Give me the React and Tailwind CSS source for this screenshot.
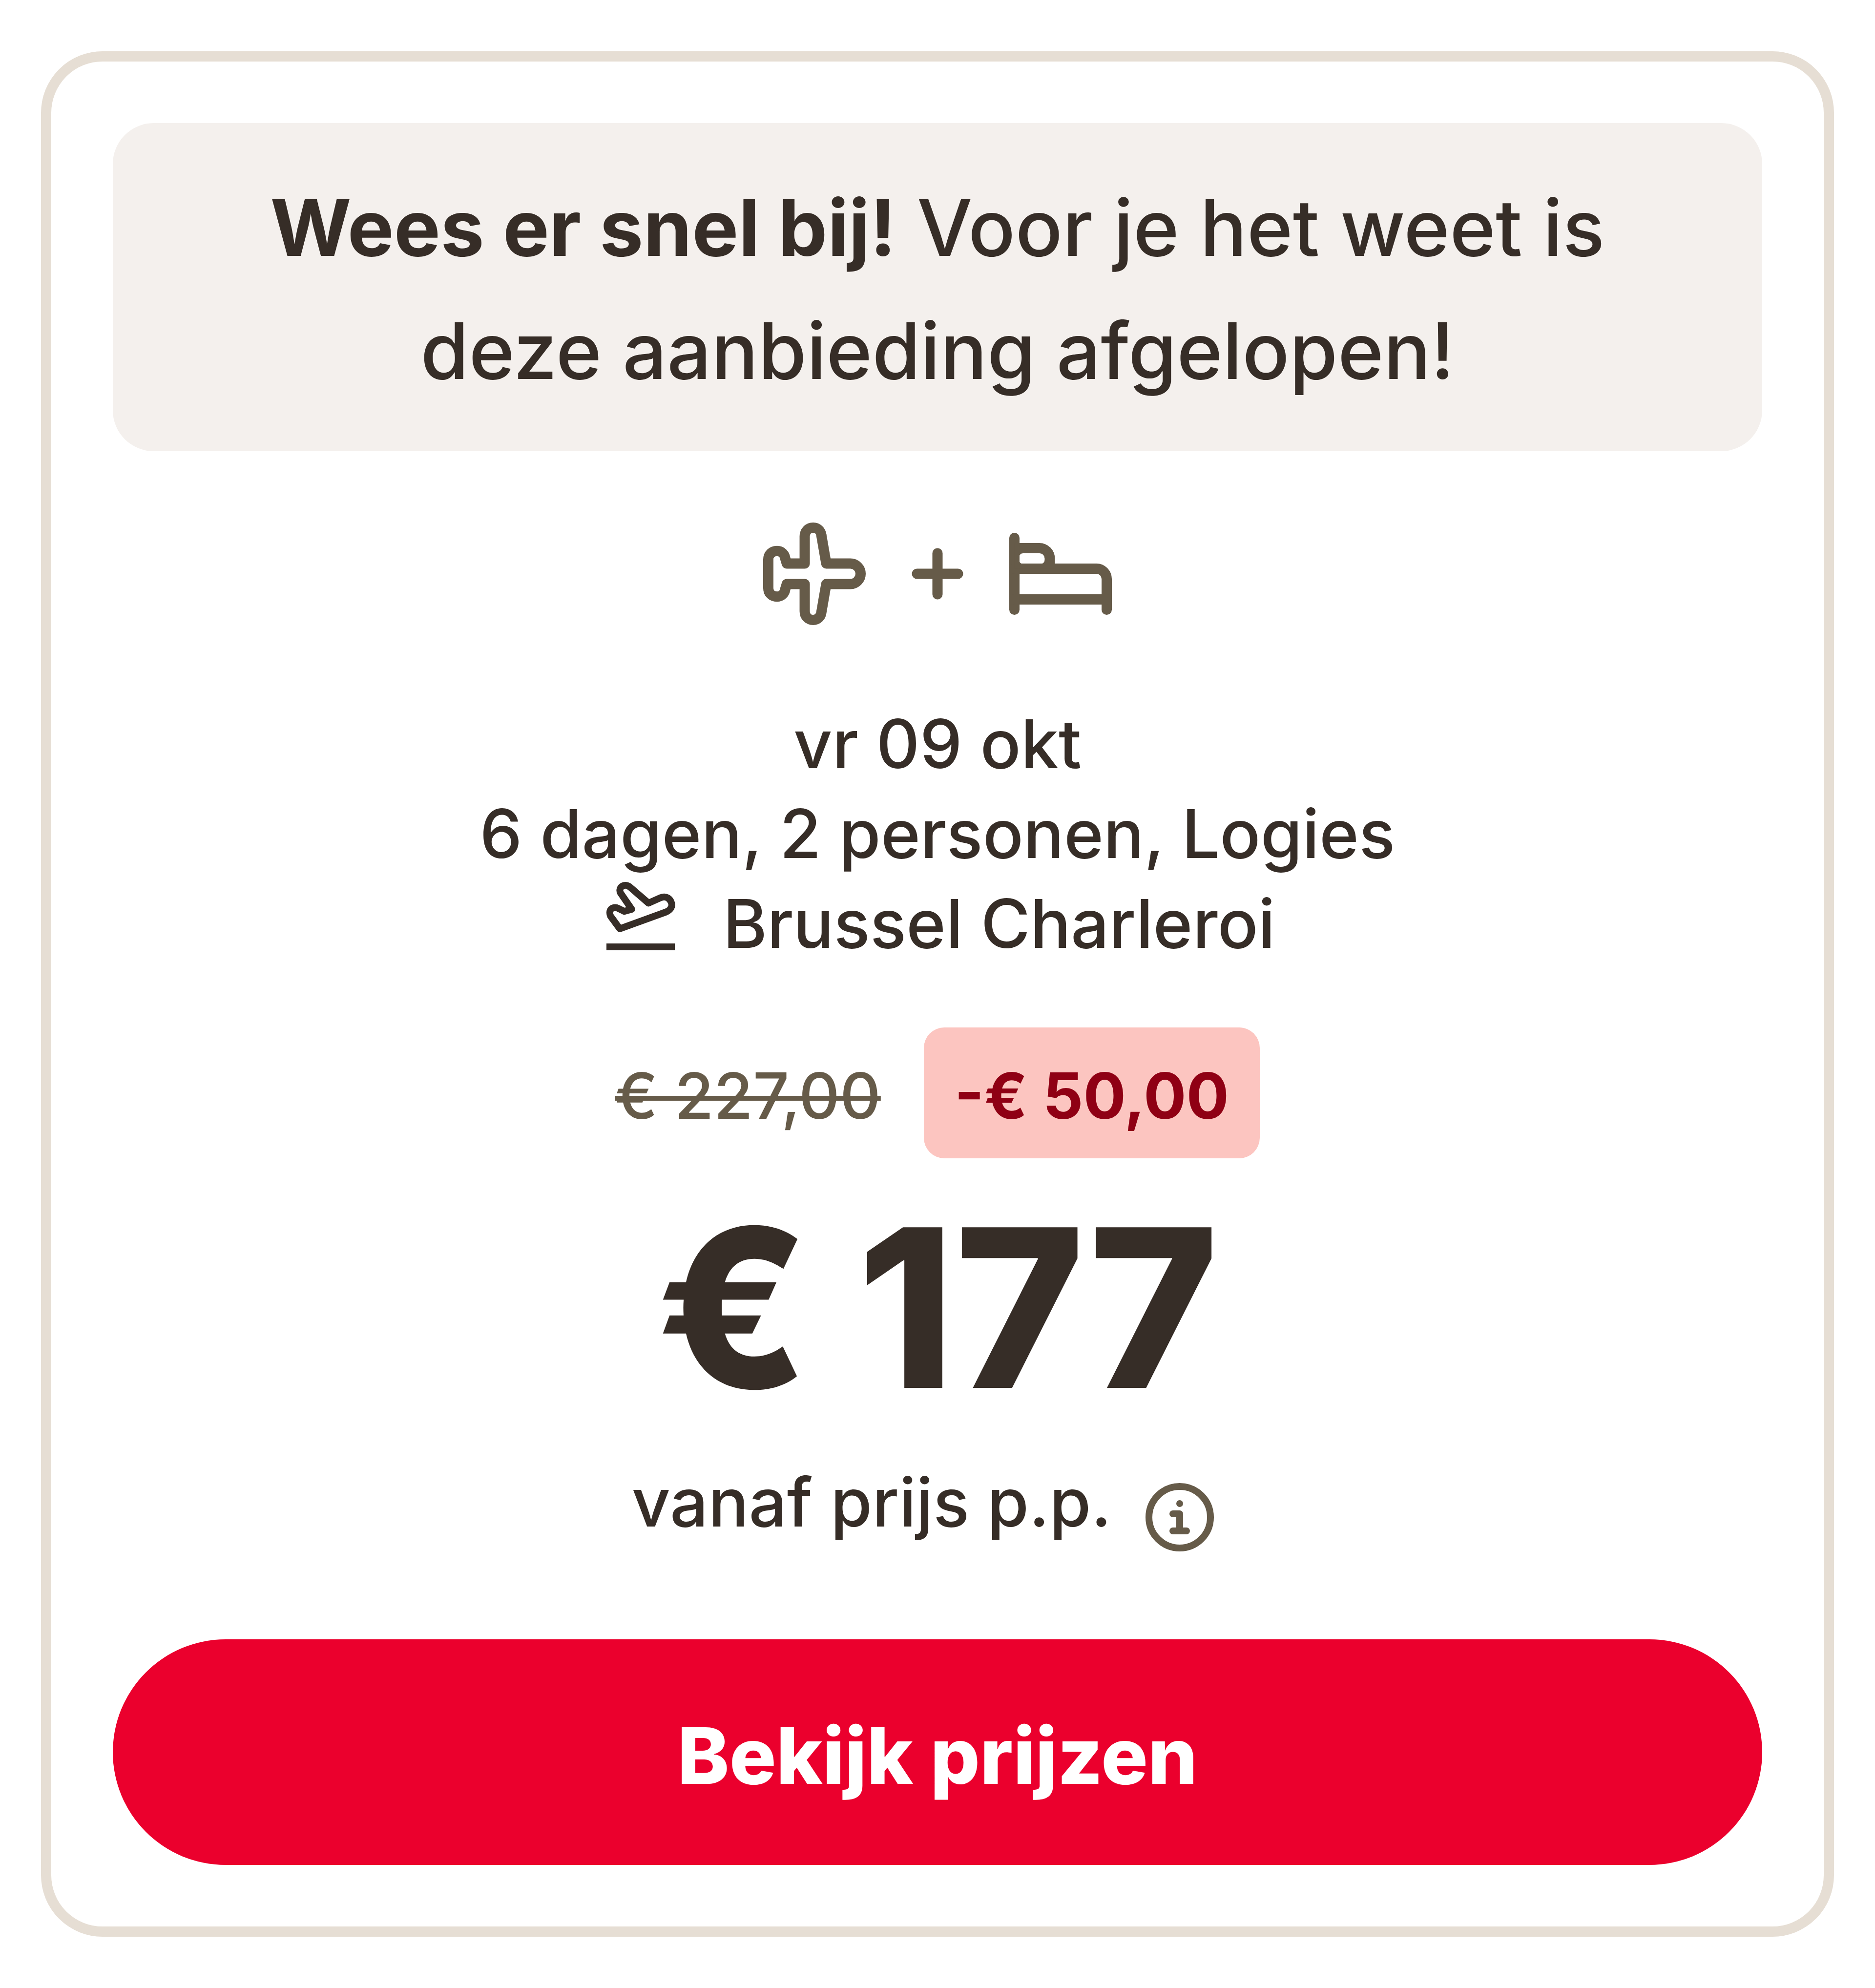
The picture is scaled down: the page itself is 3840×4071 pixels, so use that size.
const offer = {
  date: 'vr 09 okt',
  summary: '6 dagen, 2 personen, Logies',
  airport: 'Brussel Charleroi',
  oldPrice: '€ 227,00',
  discount: '-€ 50,00',
  price: '€ 177',
};

function Icon({ className, viewBox = '0 0 24 24', children }) {
  return (
    <svg
      className={className}
      viewBox={viewBox}
      fill="none"
      stroke="currentColor"
      strokeWidth={2}
      strokeLinecap="round"
      strokeLinejoin="round"
      aria-hidden="true"
    >
      {children}
    </svg>
  );
}

function PlaneIcon() {
  return (
    <Icon className="size-[252px]">
      <path d="M3 9.2C3 8.2 3.7 7.55 4.7 7.55C5.6 7.55 6.2 8.2 6.3 9L6.6 10H10.1V4.7C10.1 3.7 10.8 3 11.75 3C12.6 3 13.25 3.6 13.35 4.5L14.3 10H19A2 2 0 0 1 19 14H14.3L13.35 19.5C13.25 20.4 12.6 21 11.75 21C10.8 21 10.1 20.3 10.1 19.3V14H6.6L6.3 15C6.2 15.8 5.6 16.45 4.7 16.45C3.7 16.45 3 15.8 3 14.8Z" />
    </Icon>
  );
}

function BedIcon() {
  return (
    <Icon className="size-[252px]">
      <path d="M3 5v14" />
      <path d="M3 11h16a2 2 0 0 1 2 2v6" />
      <path d="M3 17h18" />
      <path
        d="M3 6h4.9a3 3 0 0 1 3 3v2H3zM4.7 8a.8.8 0 0 0-.8.8v.5a.8.8 0 0 0 .8.8h3.4a.8.8 0 0 0 .8-.8V9a1 1 0 0 0-1-1z"
        fill="currentColor"
        fillRule="evenodd"
        stroke="none"
      />
    </Icon>
  );
}

function TakeoffIcon() {
  return (
    <Icon className="size-[168px] shrink-0" viewBox="0 1 24 24">
      <path d="M5.9 15.7L19.4 10.8C20.8 10.2 21.4 9.2 21 8.1C20.6 6.8 19.4 6 17.9 6.6L14.3 8.2L9 3.6C8.3 3 7.4 2.8 6.7 3.2C6 3.6 5.7 4.4 6.1 5.2L9.4 10L7.2 10.6L5.4 9.7C4.6 9.3 3.8 9.5 3.3 10C2.9 10.5 2.9 11.3 3.2 12Z" />
      <path d="M2 21h20" strokeLinecap="butt" />
    </Icon>
  );
}

function InfoIcon() {
  return (
    <Icon className="size-[168px]">
      <circle cx="12" cy="12" r="9" />
      <circle cx="12" cy="8" r="1" fill="currentColor" stroke="none" />
      <path d="M10 11h2v5M10 16h4" />
    </Icon>
  );
}

export default function App() {
  return (
    <main className="bg-white px-[84px] py-[105px] font-['Inter',sans-serif] font-medium text-[#362d27]">
      <article className="rounded-[126px] border-[21px] border-[#e6ded4] p-[126px] text-center">
        <p className="rounded-[84px] bg-[#f4f0ed] px-[84px] pt-[88px] pb-[80px] text-[160px] leading-[252px]">
          <strong className="font-bold">Wees er snel bij!</strong> Voor je het weet is
          <br />
          deze aanbieding afgelopen!
        </p>

        {/* Flight + stay */}
        <div className="mt-[125px] flex items-center justify-center text-[#665b49]">
          <PlaneIcon />
          <Icon className="size-[252px]">
            <path d="M12 8v8M8 12h8" />
          </Icon>
          <BedIcon />
        </div>

        <div className="mt-[130px] text-[138px] leading-[184px]">
          <p>{offer.date}</p>
          <p>{offer.summary}</p>
          <p className="flex items-start justify-center gap-[84px]">
            <TakeoffIcon />
            {offer.airport}
          </p>
        </div>

        {/* Prices */}
        <div className="mt-[121px] flex items-baseline justify-center gap-[88px] text-[130px] leading-[184px]">
          <s className="text-[#665b49] decoration-[10px]">{offer.oldPrice}</s>
          <span className="rounded-[42px] bg-[#fcc5c0] px-[63px] pt-[48px] pb-[36px] font-bold text-[#8f0014]">
            {offer.discount}
          </span>
        </div>
        <p className="my-[54px] text-[452px] leading-[504px] font-extrabold">{offer.price}</p>
        <div className="flex h-[207px] items-end justify-center text-[138px] leading-[184px]">
          <span className="self-start">vanaf prijs p.p.</span>
          <button type="button" aria-label="Meer informatie over de prijs" className="mr-[46px] ml-[56px] text-[#665b49]">
            <InfoIcon />
          </button>
        </div>

        <button
          type="button"
          className="mt-[166px] block w-full rounded-full bg-[#eb002d] pt-[112px] pb-[98px] text-[160px] leading-[252px] font-extrabold text-white"
        >
          Bekijk prijzen
        </button>
      </article>
    </main>
  );
}
